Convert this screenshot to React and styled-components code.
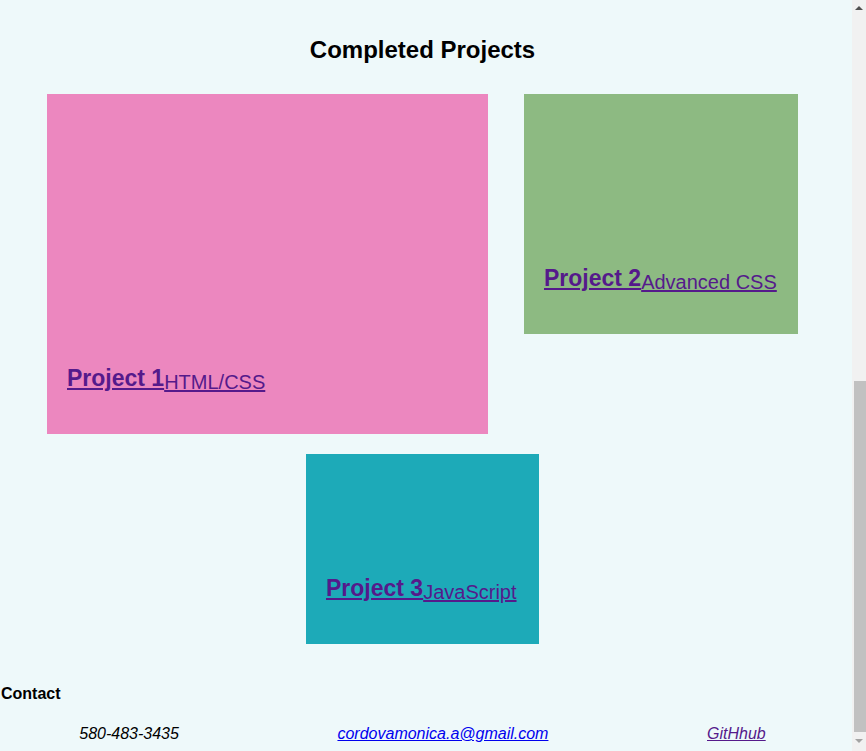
import React from 'react';
import styled, { createGlobalStyle } from 'styled-components';

const GlobalStyle = createGlobalStyle`
	body {
		margin: 0;
		background-color: #eef9fa;
		font-family: "Liberation Sans", Arial, sans-serif;
	}
`;

const Page = styled.div`
	padding-right: 21px;
	min-height: 751px;
	box-sizing: border-box;
`;

// imitation of the browser scrollbar seen in the screenshot
const ScrollTrack = styled.div`
	position: fixed;
	top: 0;
	right: 0;
	width: 14px;
	height: 100%;
	background-color: #f1f1f1;
	display: flex;
	flex-direction: column;
	align-items: center;
`;

const Arrow = styled.div`
	width: 0;
	height: 0;
	margin: ${(p) => (p.down ? '7px 0 0' : '6px 0 0')};
	border-left: 4px solid transparent;
	border-right: 4px solid transparent;
	${(p) => (p.down ? 'border-top: 4px solid #a3a3a3;' : 'border-bottom: 4px solid #505050;')}
`;

const Thumb = styled.div`
	margin-top: auto;
	margin-left: 2px;
	width: 12px;
	height: 351px;
	background-color: #c1c1c1;
`;

const Section = styled.section`
	padding-top: 36px;
`;

const Title = styled.h2`
	font-size: 24px;
	text-align: center;
	margin: 0 0 30px;
`;

const Grid = styled.div`
	display: flex;
	flex-wrap: wrap;
	justify-content: center;
	align-items: flex-start;
	column-gap: 36px;
	row-gap: 20px;
`;

const Card = styled.div`
	width: ${(p) => p.w}px;
	height: ${(p) => p.h}px;
	background-color: ${(p) => p.bg};
	display: flex;
	align-items: flex-end;
	padding: 0 20px 40px;
	box-sizing: border-box;
`;

const CardLink = styled.a`
	color: #551a8b;
	text-decoration: none;
	white-space: nowrap;
`;

const Name = styled.span`
	font-size: 23px;
	font-weight: bold;
	text-decoration: underline;
`;

const Tech = styled.span`
	display: inline-block;
	font-size: 20px;
	vertical-align: -3px;
	text-decoration: underline;
`;

const Footer = styled.footer`
	margin-top: 41px;
	padding-bottom: 8px;
`;

const ContactTitle = styled.h4`
	font-size: 16px;
	margin: 0 0 22px;
	padding-left: 1px;
`;

const ContactRow = styled.div`
	display: flex;
	justify-content: space-around;
	font-style: italic;
	font-size: 16px;
`;

const Item = styled.span`
	color: #000;
`;

const ItemLink = styled.a`
	color: ${(p) => (p.$visited ? '#551a8b' : '#0000ee')};
	text-decoration: underline;
`;

const projects = [
	{ name: 'Project 1', tech: 'HTML/CSS', w: 441, h: 340, bg: '#ec87bf' },
	{ name: 'Project 2', tech: 'Advanced CSS', w: 274, h: 240, bg: '#8dba82' },
	{ name: 'Project 3', tech: 'JavaScript', w: 233, h: 190, bg: '#1daab8' },
];

const App = () => {
	return (
		<Page>
			<GlobalStyle />
			<Section>
				<Title>Completed Projects</Title>
				<Grid>
					{projects.map((p) => (
						<Card key={p.name} w={p.w} h={p.h} bg={p.bg}>
							<CardLink href="#">
								<Name>{p.name}</Name>
								<Tech>{p.tech}</Tech>
							</CardLink>
						</Card>
					))}
				</Grid>
			</Section>
			<Footer>
				<ContactTitle>Contact</ContactTitle>
				<ContactRow>
					<Item>580-483-3435</Item>
					<ItemLink href="#">cordovamonica.a@gmail.com</ItemLink>
					<ItemLink href="#" $visited>GitHhub</ItemLink>
				</ContactRow>
			</Footer>
			<ScrollTrack>
				<Arrow />
				<Thumb />
				<Arrow down />
				<div style={{ height: 8 }} />
			</ScrollTrack>
		</Page>
	);
};

export default App;
